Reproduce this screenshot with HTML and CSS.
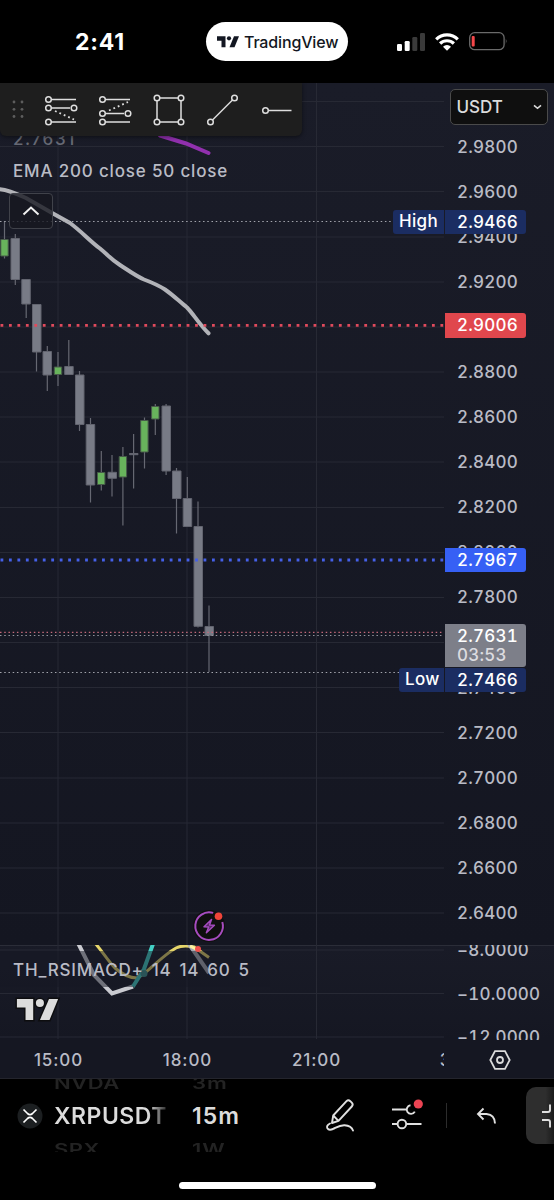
FILE: index.html
```html
<!DOCTYPE html>
<html lang="en">
<head>
    <meta charset="UTF-8">
    <meta name="viewport" content="width=device-width, initial-scale=1.0">
    <title>XRPUSDT</title>

    <link rel="stylesheet" href="styles.css">
</head>
<body>
    <header class="status-bar">
        <div class="clock">2:41</div>
        <div class="app-pill">
            <svg class="pill-logo" viewBox="0 0 44 23"><path d="M0 0h17v22H9V9H0z"/><circle cx="24" cy="4.2" r="4.2"/><path d="M34 0h10l-9 22h-10z"/></svg>
            <span>TradingView</span>
        </div>
        <div class="status-icons">
            <svg width="28" height="18" viewBox="0 0 28 18">
                <g fill="#fff"><rect x="0" y="11" width="5" height="7" rx="1.3"/><rect x="7.7" y="8" width="5" height="10" rx="1.3"/></g>
                <g fill="#3a3a3a"><rect x="15.3" y="4" width="5" height="14" rx="1.3"/><rect x="23" y="0" width="5" height="18" rx="1.3"/></g>
            </svg>
            <svg width="24" height="18" viewBox="0 0 24 18">
                <g fill="none" stroke="#fff" stroke-width="3.2"><path d="M1.2 6.3a15.5 15.5 0 0 1 21.6 0"/><path d="M5.1 10.5a10 10 0 0 1 13.8 0"/></g>
                <path fill="#fff" d="M8 13.7a5.8 5.8 0 0 1 8 0L12 17.8z"/>
            </svg>
            <svg width="39" height="19" viewBox="0 0 39 19">
                <rect x=".7" y=".7" width="34.4" height="17" rx="5" fill="none" stroke="#6a6a6a" stroke-width="1.3"/>
                <rect x="2.7" y="4" width="3" height="10.5" rx="1" fill="#f4474a"/>
                <path d="M36.8 6.4q1.8 2.8 0 5.6z" fill="#6a6a6a"/>
            </svg>
        </div>
    </header>

    <main class="chart">
        <section class="pane price-pane">
            <div class="plot">
                <svg class="canvas" width="444" height="862" viewBox="0 83 444 862">
                    <path class="grid" d="M58 83V945M187 83V945M316.500 83V945M0 101.500H444M0 146.500H444M0 191.500H444M0 237H444M0 282H444M0 327H444M0 372H444M0 417H444M0 462H444M0 507.500H444M0 552.500H444M0 597.500H444M0 642.500H444M0 687.500H444M0 732.500H444M0 778H444M0 823H444M0 868H444M0 913H444"/>

                    <!-- candles -->
                    <path class="wick" d="M4.500 221V258.500M15.300 234V285M26.200 279V318M36.500 304V371.500M47.300 346V391M58 352V386M68.800 340V375M79.500 371V431M90.500 418V502.500M101.300 451V490.500M112 455V496.500M122.900 447V525.500M133.600 434V488.500M144.500 417.500V468.500M155.300 404V435M166.100 404V475M176.500 468V533.500M187.300 477V527M198 501.500V627.500M209 605.500V672"/>
                    <path class="down" d="M11 238.500h8.500v41H11zM21.800 279.500h8.500v24.500h-8.500zM32.500 304.500h8.500v47.500h-8.500zM43 351.500h8.500v23.500H43zM64.700 366.500h8.500v8h-8.500zM75.500 375h8.500v49.500h-8.500zM86.200 424.500h8.500v60.500h-8.500zM108 472.300h8.500v6H108zM129.500 453.500h8.500v1.200h-8.500zM162 406h8.500v65H162zM172.500 471h8.500v27.500h-8.500zM183.200 498.500h8.500v28h-8.500zM194 526.500h8.500v99.800H194zM205 626.500h8.500v9H205z"/>
                    <path class="up" d="M.8 239.500h7.400v16.500H.8zM54.300 367h7.400v7.500h-7.400zM97.500 472.500h7.400v12h-7.400zM119.200 456.500h7.400v20.500h-7.400zM140.700 420.500h7.400v31.500h-7.400zM151.600 406.500h7.400v12.500h-7.400z"/>

                    <path class="ema-fast" d="M0 189.300C8 190 16 193.500 26 198L53 213.500 70 223C82 232 90 241 100 248.500C108 255 110 258.500 120 265C130 271.500 136 276 144 279.500C152 282.500 158 285 165 289.500C173 295 180 302 187 307.500C193 313.500 199 324 208.500 333.300"/>
                    <path class="ema-slow" d="M0 90l4 1.500M160 135.500L186 143.500 208.500 153"/>

                    <path class="level level-high" d="M0 221.500H393"/>
                    <path class="level level-red" d="M.5 325.300H444"/>
                    <path class="level level-blue" d="M.5 560H444"/>
                    <path class="level level-bid" d="M0 632.300H444"/>
                    <path class="level level-last" d="M0 635.500H444"/>
                    <path class="level level-high" d="M0 672.500H399"/>
                </svg>

                <div class="legend legend-value">2.7631</div>
                <div class="legend legend-ema">EMA 200 close 50 close</div>
                <button class="collapse" aria-label="Collapse">
                    <svg width="18" height="10" viewBox="0 0 18 10"><path d="M1.500 8.500L9 1.500l7.500 7"/></svg>
                </button>

                <div class="toolbar">
                    <svg class="grip" width="12" height="19" viewBox="0 0 12 19"><circle cx="2" cy="2" r="1.400"/><circle cx="10" cy="2" r="1.400"/><circle cx="2" cy="9.300" r="1.400"/><circle cx="10" cy="9.300" r="1.400"/><circle cx="2" cy="16.500" r="1.400"/><circle cx="10" cy="16.500" r="1.400"/></svg>
                    <svg width="54" height="36" viewBox="0 0 54 36">
                        <path d="M14 7.500H42M14 16H36M14 30H42"/><path class="dots" d="M21 19l19 8.500"/>
                        <circle cx="14.500" cy="7.500" r="2.800"/><circle cx="14.500" cy="16" r="2.800"/><circle cx="40" cy="16" r="2.800"/><circle cx="14.500" cy="30" r="2.800"/>
                    </svg>
                    <svg width="54" height="36" viewBox="0 0 54 36">
                        <path d="M14 7.500H42M14 21.500H36M14 30H42"/><path class="dots" d="M21 18.500l19-8.500"/>
                        <circle cx="14.500" cy="7.500" r="2.800"/><circle cx="14.500" cy="21.500" r="2.800"/><circle cx="40" cy="21.500" r="2.800"/><circle cx="14.500" cy="30" r="2.800"/>
                    </svg>
                    <svg width="54" height="36" viewBox="0 0 54 36">
                        <path d="M15 6H39V30H15z"/>
                        <circle cx="15" cy="6" r="2.800"/><circle cx="39" cy="6" r="2.800"/><circle cx="15" cy="30" r="2.800"/><circle cx="39" cy="30" r="2.800"/>
                    </svg>
                    <svg width="54" height="36" viewBox="0 0 54 36">
                        <path d="M14.500 30L38.500 6"/><circle cx="14.500" cy="30" r="2.800"/><circle cx="38.500" cy="6" r="2.800"/>
                    </svg>
                    <svg width="54" height="36" viewBox="0 0 54 36">
                        <path d="M15 18.500H41.500"/><circle cx="15.500" cy="18.500" r="2.800"/>
                    </svg>
                </div>

                <svg class="event" width="34" height="34" viewBox="0 0 34 34">
                    <circle cx="17" cy="17" r="16" fill="#0f0f0f"/>
                    <path d="M21.200 3.900A13.800 13.800 0 1 0 30.300 13" fill="none" stroke="#a64cc0" stroke-width="2"/>
                    <path d="M19.500 10.500l-7.500 7.300 4.700.2-2.300 5.800 8-7.500-4.900-.2z" fill="#a64cc0" fill-opacity=".45" stroke="#a64cc0" stroke-width="1.500" stroke-linejoin="round"/>
                    <circle cx="26.500" cy="7.200" r="3.800" fill="#f0453a"/>
                </svg>
                <span class="tag-name tag-name-high">High</span>
                <span class="tag-name tag-name-low">Low</span>
            </div>

            <div class="axis price-axis">
                <ul class="ticks">
                    <li></li>
                    <li>2.9800</li>
                    <li>2.9600</li>
                    <li>2.9400</li>
                    <li>2.9200</li>
                    <li></li>
                    <li>2.8800</li>
                    <li>2.8600</li>
                    <li>2.8400</li>
                    <li>2.8200</li>
                    <li>2.8000</li>
                    <li>2.7800</li>
                    <li></li>
                    <li>2.7400</li>
                    <li>2.7200</li>
                    <li>2.7000</li>
                    <li>2.6800</li>
                    <li>2.6600</li>
                    <li>2.6400</li>
                </ul>
                <button class="currency">USDT
                    <svg width="9" height="6" viewBox="0 0 9 6"><path d="M1 1.300l3.500 3 3.500-3"/></svg>
                </button>
                <span class="tag tag-high">2.9466</span>
                <span class="tag tag-red">2.9006</span>
                <span class="tag tag-blue">2.7967</span>
                <span class="tag tag-last">2.7631<small>03:53</small></span>
                <span class="tag tag-low">2.7466</span>
            </div>
        </section>

        <section class="pane study-pane">
            <div class="plot">
                <svg class="canvas" width="444" height="95" viewBox="0 945 444 95">
                    <path class="grid" d="M58 945V1039M187 945V1039M316.500 945V1039M0 950H444M0 993.500H444M0 1037H444"/>
                    <g class="study">
                        <path stroke="#e5d56a" d="M95 943C102 951 108 961 115 968C123 975 129 978 137 978C147 974 160 957 176 948C182 945 190 946 194 947L209 957.500"/>
                        <path stroke="#c9cad0" d="M78 943L94 975 112 993.500 133 986.500"/>
                        <path stroke="#43cfc4" d="M133 986.500L144 969 153 944"/>
                        <path stroke="#a9abb3" d="M189 944L209 973"/>
                    </g>
                    <circle cx="144" cy="973.500" r="3.500" fill="#3f8f8b"/>
                </svg>
                <div class="legend legend-study">TH_RSIMACD+ 14 14 60 5</div>
                <svg class="signal" width="14" height="10" viewBox="0 0 14 10"><path d="M1 2l7 3.500" stroke="#fff3a0" stroke-width="3"/><circle cx="9" cy="5" r="3" fill="#f4524d"/></svg>
                <svg class="logo" width="46" height="27" viewBox="-2 -2 48 26"><path d="M0 0h17v22H9V9H0z"/><circle cx="24" cy="4.200" r="4.200"/><path d="M33.500 0H43l-9 22h-10z"/></svg>
            </div>
            <div class="axis study-axis">
                <ul class="ticks">
                    <li>−8.0000</li>
                    <li>−10.0000</li>
                    <li>−12.0000</li>
                </ul>
            </div>
        </section>

        <section class="time-row">
            <div class="time-axis">
                <span>15:00</span><span>18:00</span><span>21:00</span><span>3</span>
            </div>
            <svg class="settings" width="22" height="20" viewBox="0 0 22 20"><path d="M6 1.200h10L20.700 10 16 18.800H6L1.300 10z"/><circle cx="11" cy="10" r="3"/></svg>
        </section>
    </main>

    <footer class="bottom-bar">
        <div class="controls">
            <svg class="coin" width="26" height="26" viewBox="0 0 26 26">
                <circle cx="13" cy="13" r="12.500" fill="#1c1f21"/>
                <path d="M6.500 6.500l4 4q2.500 2.300 5 0l4-4M6.500 19.500l4-4q2.500-2.300 5 0l4 4" fill="none" stroke="#fff" stroke-width="1.700"/>
            </svg>
            <div class="wheel wheel-symbol">
                <span class="prev">NVDA</span>
                <span class="current">XRPUSDT</span>
                <span class="next">SPX</span>
            </div>
            <div class="wheel wheel-interval">
                <span class="prev">3m</span>
                <span class="current">15m</span>
                <span class="next">1W</span>
            </div>
            <svg class="draw" width="32" height="36" viewBox="0 0 32 36">
                <path d="M8 25l1.200-7.500L22.500 3.200q1.800-1.800 3.800 0l1.500 1.500q1.800 1.800 0 3.800L14.500 22.800zM9.200 17.500l5.300 5.300"/>
                <path d="M6 25.500q-4 2-2.600 4.700 1.400 2.500 5.600.8c5-2.500 7-4 11.500-3.800 4.500.3 7.500 2.300 8.500 5.300"/>
            </svg>
            <svg class="indicators" width="34" height="36" viewBox="0 0 34 36">
                <path d="M2 12.500h14.500M20.500 8.300a4.300 4.300 0 1 0 4.300 6.300M2 27h5.500M16.300 27H31.500"/>
                <circle cx="11.900" cy="27" r="4.300"/>
                <circle class="alert" cx="28.300" cy="7" r="4.600"/>
            </svg>
            <i class="divider"></i>
            <svg class="undo" width="22" height="20" viewBox="0 0 22 20"><path d="M7.500 1.500L2 7l5.500 5.500M2.500 7h8q8.500 1 8.500 9.500"/></svg>
            <div class="fullscreen">
                <svg width="11" height="30" viewBox="0 0 11 30"><path d="M1 11h6q2 0 2-2V3.500M1 19h6q2 0 2 2v5.500"/></svg>
            </div>
        </div>
        <div class="home-indicator"></div>
    </footer>
</body>
</html>
```

FILE: styles.css
```css
* {
    box-sizing: border-box;
}

body {
    margin: 0;
    width: 554px;
    height: 1200px;
    overflow: hidden;
    background: #000;
    color: #b9bbc5;
    font: 500 17px/20px Inter, "Liberation Sans", sans-serif;
}

button {
    font: inherit;
    padding: 0;
}

svg {
    display: block;
    flex: none;
}

/* status bar */
.status-bar {
    display: flex;
    align-items: center;
    height: 83px;
    padding-left: 75px;
    color: #fff;
}

.clock {
    width: 131px;
    font-size: 23px;
    font-weight: 700;
    letter-spacing: .8px;
}

.app-pill {
    display: flex;
    align-items: center;
    gap: 5px;
    width: 141.5px;
    height: 38.5px;
    padding-left: 11px;
    border-radius: 20px;
    background: #fff;
    color: #131722;
    font-size: 16px;
    letter-spacing: -.15px;
}

.pill-logo {
    width: 22px;
    height: 12px;
    fill: #131722;
}

.status-icons {
    display: flex;
    align-items: center;
    gap: 10px;
    padding-left: 49.5px;
}

/* chart */
.chart {
    height: 996px;
    background: #161823;
}

.pane {
    display: flex;
    overflow: hidden;
}

.price-pane {
    height: 862px;
    background: linear-gradient(#1a1c28, #141621);
}

.study-pane {
    height: 95px;
    background: linear-gradient(#191b27, #151722);
    box-shadow: inset 0 1px #2b2d38;
}

.plot {
    position: relative;
    width: 444px;
}

.axis {
    position: relative;
    width: 110px;
}

.grid {
    stroke: #272934;
    stroke-width: 1;
}

.wick {
    stroke: #666872;
    stroke-width: 1.2;
}

.down {
    fill: #787b86;
    stroke: #62646f;
    stroke-width: 1;
}

.up {
    fill: #68b35c;
    stroke: #485b4a;
    stroke-width: 1;
}

.ema-fast,
.ema-slow {
    fill: none;
    stroke: #b2b3b8;
    stroke-width: 4;
    stroke-linecap: round;
}

.ema-slow {
    stroke: #9130ae;
}

.level {
    stroke-width: 1.2;
    stroke-dasharray: 1.5 2.73;
}

.level-high {
    stroke: #a3a5ad;
}

.level-last {
    stroke: #94969f;
}

.level-bid {
    stroke: #c4697a;
}

.level-red,
.level-blue {
    stroke: #e04a5c;
    stroke-width: 2.8;
    stroke-dasharray: 2.8 5.66;
}

.level-blue {
    stroke: #4560e8;
}

.legend {
    position: absolute;
    left: 13px;
    letter-spacing: .83px;
    white-space: nowrap;
}

.legend-value {
    top: 46px;
    color: #666974;
    letter-spacing: 1.6px;
}

.legend-ema {
    top: 78px;
}

.legend-study {
    top: 6px;
    left: 0;
    width: 270px;
    height: 36px;
    padding: 9px 13px;
    line-height: 20px;
    letter-spacing: .8px;
    word-spacing: 2.6px;
    background: rgba(22, 24, 35, .5);
}

.collapse {
    position: absolute;
    top: 110px;
    left: 9px;
    display: grid;
    place-items: center;
    width: 44px;
    height: 36px;
    border: 1px solid #40424a;
    border-radius: 4px;
    background: rgba(22, 24, 33, .8);
}

.collapse path {
    fill: none;
    stroke: #f0f0f0;
    stroke-width: 2;
}

.toolbar {
    position: absolute;
    top: 0;
    left: 0;
    display: flex;
    align-items: center;
    width: 302px;
    height: 53px;
    padding-left: 12px;
    border-radius: 0 0 6px 6px;
    background: #1e1e1e;
    box-shadow: 0 1px 4px rgba(0, 0, 0, .5);
}

.toolbar svg {
    fill: #1e1e1e;
    stroke: #dedede;
    stroke-width: 1.5;
}

.toolbar .grip {
    margin-right: 10px;
    fill: #5d5d5d;
    stroke: none;
}

.toolbar .dots {
    stroke-width: 1.8;
    stroke-dasharray: 1.8 3;
}

.event {
    position: absolute;
    left: 192px;
    top: 826px;
}

.tag-name {
    position: absolute;
    right: 0;
    height: 24px;
    padding: 0 6px;
    border-radius: 3px 0 0 3px;
    background: #1b2d62;
    color: #fff;
    line-height: 23px;
    letter-spacing: .3px;
}

.tag-name-high {
    top: 127px;
    width: 51px;
}

.tag-name-low {
    top: 585px;
    width: 45px;
}

/* price scale */
.ticks {
    margin: 0;
    padding: 0 0 0 13px;
    list-style: none;
    letter-spacing: .2px;
    font-variant-numeric: tabular-nums;
}

.ticks li {
    height: 45.08px;
    line-height: 45px;
}

.price-axis .ticks {
    margin-top: -3.5px;
}

.study-axis {
    overflow: hidden;
}

.study-axis .ticks {
    margin-top: -16px;
}

.study-axis li {
    height: 43.5px;
    line-height: 43.5px;
}

.currency {
    position: absolute;
    top: 6px;
    left: 5.5px;
    display: flex;
    align-items: center;
    justify-content: space-between;
    width: 98.5px;
    height: 36px;
    padding: 0 5px 0 6px;
    border: 1px solid #4a4a4a;
    border-radius: 5px;
    background: #0f0f0f;
    color: #dbdbdb;
}

.currency path {
    fill: none;
    stroke: #dbdbdb;
    stroke-width: 1.6;
}

.tag {
    position: absolute;
    left: 1px;
    width: 80.5px;
    height: 24px;
    padding-left: 12px;
    border-radius: 0 3px 3px 0;
    color: #fff;
    line-height: 24px;
    letter-spacing: .2px;
    font-variant-numeric: tabular-nums;
}

.tag-high {
    top: 127px;
    background: #1b2d62;
}

.tag-red {
    top: 230px;
    height: 25px;
    line-height: 25px;
    background: #e0474d;
}

.tag-blue {
    top: 465px;
    background: #3660f5;
}

.tag-last {
    top: 541px;
    height: 43px;
    background: #7d7f89;
}

.tag-last small {
    display: block;
    margin-top: -4px;
    color: #dcdce0;
    font-size: 17px;
    line-height: 23px;
}

.tag-low {
    top: 585px;
    background: #1b2d62;
}

/* lower study */
.study path {
    fill: none;
    stroke-width: 4;
}

.study path:first-child {
    stroke-width: 3;
}

.signal {
    position: absolute;
    top: -1px;
    left: 189px;
}

.logo {
    position: absolute;
    top: 51px;
    left: 15px;
    fill: #dcdcdc;
    stroke: #0d0d0f;
    stroke-width: 3;
    paint-order: stroke;
}

/* time scale */
.time-row {
    display: flex;
    align-items: center;
    height: 39px;
    padding-top: 1px;
    background: #151722;
    border-bottom: 1px solid #24252d;
}

.time-axis {
    display: flex;
    width: 444px;
    overflow: hidden;
    letter-spacing: .9px;
}

.time-axis span {
    flex: none;
    width: 129px;
    text-align: center;
}

.time-axis span:first-child {
    margin-left: -6px;
}

.settings {
    margin-left: 45px;
    fill: none;
    stroke: #dbdbdb;
    stroke-width: 1.8;
}

/* bottom bar */
.controls {
    display: flex;
    align-items: center;
    height: 73px;
    padding-left: 17px;
}

.wheel {
    display: flex;
    flex-direction: column;
    justify-content: center;
    height: 73px;
    overflow: hidden;
    font-size: 23px;
    font-weight: 600;
    line-height: 34px;
    letter-spacing: .5px;
    color: #dcdcdc;
}

.wheel span {
    flex: none;
}

.wheel .prev,
.wheel .next {
    height: 32px;
    color: #232323;
    line-height: 32px;
    font-size: 22px;
    transform: scaleY(.72);
}

.wheel-symbol {
    width: 112px;
    margin-left: 11px;
}

.wheel-symbol .current {
    background: linear-gradient(90deg, #dcdcdc 84%, #333 100%);
    background-clip: text;
    color: transparent;
}

.wheel-interval {
    width: 60px;
    margin-left: 26px;
    letter-spacing: 1px;
}

.draw,
.indicators,
.undo,
.fullscreen svg {
    fill: none;
    stroke: #e0e0e0;
    stroke-width: 1.9;
}

.draw {
    margin-left: 72px;
    stroke-linejoin: round;
    stroke-linecap: round;
}

.indicators {
    margin-left: 33.5px;
    margin-top: -2px;
}

.indicators .alert {
    fill: #ec4453;
    stroke: none;
}

.divider {
    width: 1px;
    height: 25px;
    margin-left: 22.5px;
    background: #2c2c2c;
}

.undo {
    margin-left: 28.5px;
    margin-top: 2px;
}

.fullscreen {
    display: flex;
    align-items: center;
    flex: none;
    width: 28px;
    height: 57px;
    margin-left: 28.5px;
    padding-left: 15px;
    border-radius: 10px 0 0 10px;
    background: linear-gradient(90deg, #2e2e2e 70%, #1a1a1a);
}

.home-indicator {
    width: 197px;
    height: 7px;
    margin: 30px auto 0;
    border-radius: 4px;
    background: #fff;
}
```
